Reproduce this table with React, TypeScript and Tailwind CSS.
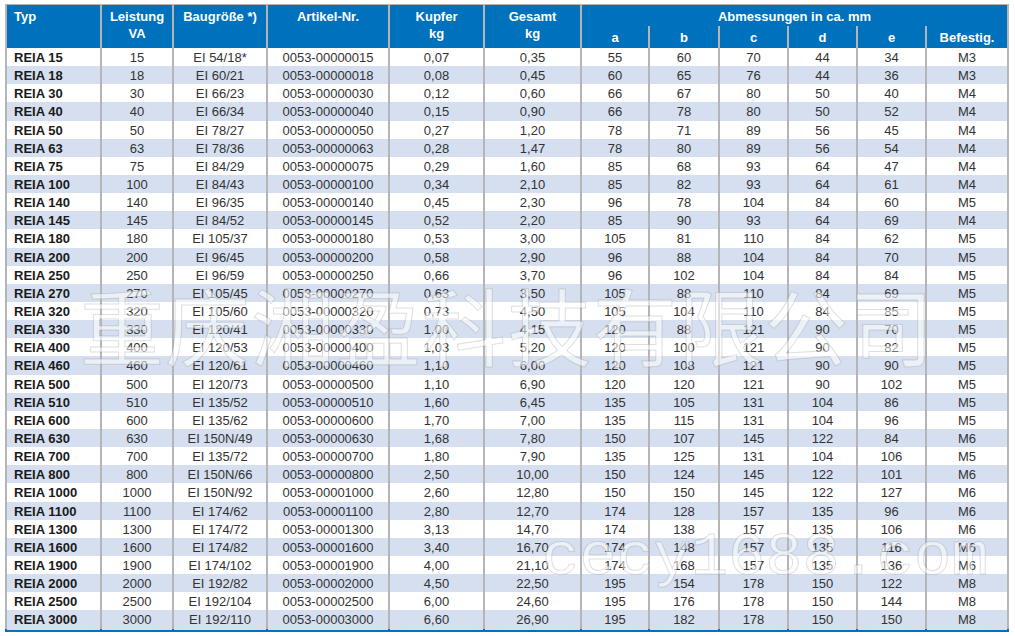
import React from 'react';

type Row = [number, string, string, string, string, string, string, string, string, string];

// va, baugröße, kupfer, gesamt, a, b, c, d, e, befestig
const data: Row[] = [
  [15, 'EI 54/18*', '0,07', '0,35', '55', '60', '70', '44', '34', 'M3'],
  [18, 'EI 60/21', '0,08', '0,45', '60', '65', '76', '44', '36', 'M3'],
  [30, 'EI 66/23', '0,12', '0,60', '66', '67', '80', '50', '40', 'M4'],
  [40, 'EI 66/34', '0,15', '0,90', '66', '78', '80', '50', '52', 'M4'],
  [50, 'EI 78/27', '0,27', '1,20', '78', '71', '89', '56', '45', 'M4'],
  [63, 'EI 78/36', '0,28', '1,47', '78', '80', '89', '56', '54', 'M4'],
  [75, 'EI 84/29', '0,29', '1,60', '85', '68', '93', '64', '47', 'M4'],
  [100, 'EI 84/43', '0,34', '2,10', '85', '82', '93', '64', '61', 'M4'],
  [140, 'EI 96/35', '0,45', '2,30', '96', '78', '104', '84', '60', 'M5'],
  [145, 'EI 84/52', '0,52', '2,20', '85', '90', '93', '64', '69', 'M4'],
  [180, 'EI 105/37', '0,53', '3,00', '105', '81', '110', '84', '62', 'M5'],
  [200, 'EI 96/45', '0,58', '2,90', '96', '88', '104', '84', '70', 'M5'],
  [250, 'EI 96/59', '0,66', '3,70', '96', '102', '104', '84', '84', 'M5'],
  [270, 'EI 105/45', '0,63', '3,50', '105', '88', '110', '84', '69', 'M5'],
  [320, 'EI 105/60', '0,73', '4,50', '105', '104', '110', '84', '85', 'M5'],
  [330, 'EI 120/41', '1,00', '4,15', '120', '88', '121', '90', '70', 'M5'],
  [400, 'EI 120/53', '1,03', '5,20', '120', '100', '121', '90', '82', 'M5'],
  [460, 'EI 120/61', '1,10', '6,00', '120', '108', '121', '90', '90', 'M5'],
  [500, 'EI 120/73', '1,10', '6,90', '120', '120', '121', '90', '102', 'M5'],
  [510, 'EI 135/52', '1,60', '6,45', '135', '105', '131', '104', '86', 'M5'],
  [600, 'EI 135/62', '1,70', '7,00', '135', '115', '131', '104', '96', 'M5'],
  [630, 'EI 150N/49', '1,68', '7,80', '150', '107', '145', '122', '84', 'M6'],
  [700, 'EI 135/72', '1,80', '7,90', '135', '125', '131', '104', '106', 'M5'],
  [800, 'EI 150N/66', '2,50', '10,00', '150', '124', '145', '122', '101', 'M6'],
  [1000, 'EI 150N/92', '2,60', '12,80', '150', '150', '145', '122', '127', 'M6'],
  [1100, 'EI 174/62', '2,80', '12,70', '174', '128', '157', '135', '96', 'M6'],
  [1300, 'EI 174/72', '3,13', '14,70', '174', '138', '157', '135', '106', 'M6'],
  [1600, 'EI 174/82', '3,40', '16,70', '174', '148', '157', '135', '116', 'M6'],
  [1900, 'EI 174/102', '4,00', '21,10', '174', '168', '157', '135', '136', 'M6'],
  [2000, 'EI 192/82', '4,50', '22,50', '195', '154', '178', '150', '122', 'M8'],
  [2500, 'EI 192/104', '6,00', '24,60', '195', '176', '178', '150', '144', 'M8'],
  [3000, 'EI 192/110', '6,60', '26,90', '195', '182', '178', '150', '150', 'M8'],
];

const COLS = 'grid-cols-[93px_70px_92px_120px_93px_95px_66px_68px_67px_67px_67px_80px]';
const head = 'bg-[#0071bc] text-white font-bold text-[13px] leading-[17px] pt-[3px] text-center';

export default function App() {
  return (
    <div className="relative w-[1015px] h-[636px] bg-white overflow-hidden font-['Liberation_Sans',Arial,sans-serif]">
      <div className="ml-[5px] mt-[4px] w-[1004px]">
        <div className="bg-[#b5b5b5] px-[2px] pt-[1px]">
          {/* Header */}
          <div className={`grid ${COLS} grid-rows-[21px_22px] gap-x-[2px]`}>
            <div className={`${head} row-span-2 !text-left pl-[7px]`}>Typ</div>
            <div className={`${head} row-span-2`}>Leistung<br />VA</div>
            <div className={`${head} row-span-2`}>Baugröße *)</div>
            <div className={`${head} row-span-2`}>Artikel-Nr.</div>
            <div className={`${head} row-span-2`}>Kupfer<br />kg</div>
            <div className={`${head} row-span-2`}>Gesamt<br />kg</div>
            <div className={`${head} col-span-6`}>Abmessungen in ca. mm</div>
            <div className={head}>a</div>
            <div className={head}>b</div>
            <div className={head}>c</div>
            <div className={head}>d</div>
            <div className={head}>e</div>
            <div className={head}>Befestig.</div>
          </div>

          {/* Rows */}
          {data.map((r, i) => {
            const [va, bau, cu, ges, a, b, c, d, e, bef] = r;
            const bg = i % 2 === 0 ? 'bg-white' : 'bg-[#d5dff0]';
            const cell = `${bg} flex items-center justify-center text-[13px] text-[#333]`;
            return (
              <div key={va} className={`grid ${COLS} gap-x-[2px] h-[18.15px]`}>
                <div className={`${bg} flex items-center pl-[7px] text-[13px] font-bold text-[#1a1a1a]`}>REIA {va}</div>
                <div className={cell}>{va}</div>
                <div className={cell}>{bau}</div>
                <div className={cell}>0053-{String(va).padStart(8, '0')}</div>
                <div className={cell}>{cu}</div>
                <div className={cell}>{ges}</div>
                <div className={cell}>{a}</div>
                <div className={cell}>{b}</div>
                <div className={cell}>{c}</div>
                <div className={cell}>{d}</div>
                <div className={cell}>{e}</div>
                <div className={cell}>{bef}</div>
              </div>
            );
          })}
        </div>
        <div className="h-[3px] bg-[#0071bc]" />
      </div>

      {/* Watermarks */}
      <div className="absolute left-[80px] top-[282px] text-[84px] leading-none tracking-[1.5px] text-[rgba(255,255,255,0.55)] [-webkit-text-stroke:1px_rgba(110,110,110,0.22)] font-['Noto_Sans_CJK_SC',sans-serif] pointer-events-none whitespace-nowrap">
        重庆湘盈科技有限公司
      </div>
      <div className="absolute left-[542px] top-[527px] text-[62px] leading-none text-[rgba(255,255,255,0.55)] [-webkit-text-stroke:1px_rgba(110,110,110,0.22)] font-['Liberation_Mono',monospace] pointer-events-none whitespace-nowrap">
        cecy1688.com
      </div>
    </div>
  );
}
